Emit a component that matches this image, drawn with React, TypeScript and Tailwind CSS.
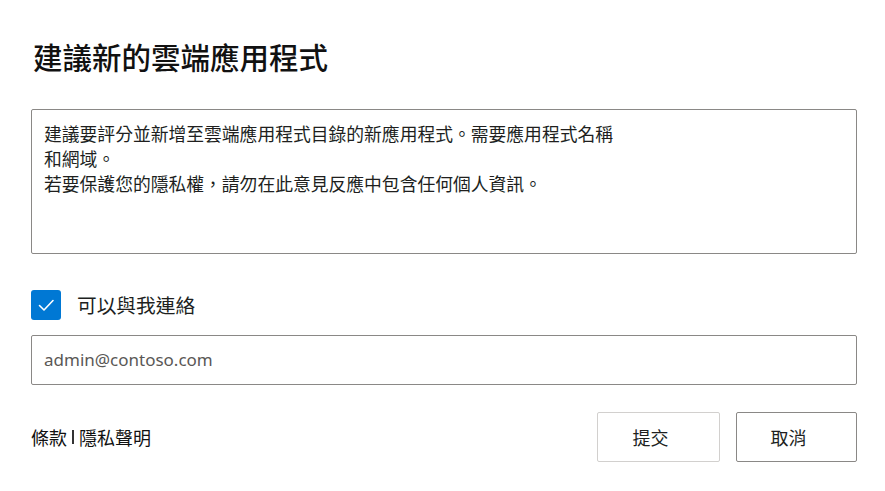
import { useState } from 'react'

const cjk = "font-['Noto_Sans_CJK_TC','Noto_Sans',sans-serif]"

function CheckIcon() {
  return (
    <svg viewBox="0 0 30 30" className="size-[30px]" fill="none">
      <path d="M8.5 15.5l4.5 4.5 9-9.5" stroke="white" strokeWidth="1.6" strokeLinecap="round" strokeLinejoin="round" />
    </svg>
  )
}

export default function App() {
  const [contact, setContact] = useState(true)

  return (
    <div className={`h-[491px] w-[885px] bg-white pl-[31px] pr-[28px] pt-[36px] text-[#000] ${cjk}`}>
      <h1 className="h-[40px] pl-[2px] text-[29.5px] font-medium leading-[40px] text-[#111]">
        建議新的雲端應用程式
      </h1>

      <div className="mt-[33px] h-[145px] rounded-[2px] border border-[#8a8886] pl-[12px] pt-[11px] text-[17.8px] leading-[25px] text-[#201f1e]">
        <p>建議要評分並新增至雲端應用程式目錄的新應用程式。需要應用程式名稱</p>
        <p>和網域。</p>
        <p>若要保護您的隱私權，請勿在此意見反應中包含任何個人資訊。</p>
      </div>

      <label className="mt-[36px] flex h-[30px] cursor-pointer items-center gap-[16px]">
        <button
          type="button"
          onClick={() => setContact(!contact)}
          className={`flex size-[30px] items-center justify-center rounded-[3px] ${contact ? 'bg-[#0078d4]' : 'border border-[#605e5c] bg-white'}`}
        >
          {contact ? <CheckIcon /> : null}
        </button>
        <span className="text-[19.7px] text-[#201f1e]">可以與我連絡</span>
      </label>

      <div className="mt-[15px] flex h-[50px] items-center rounded-[2px] border border-[#8a8886] pl-[12px]">
        <span className="font-['Noto_Sans',sans-serif] text-[17px] text-[#5a5856]">admin@contoso.com</span>
      </div>

      <div className="mt-[27px] flex items-center justify-between">
        <div className="flex items-center text-[18px] text-[#111]">
          <span>條款</span>
          <span className="mx-[5px] h-[14px] w-[2px] bg-[#333]" />
          <span>隱私聲明</span>
        </div>
        <div className="flex gap-[16px]">
          <button
            type="button"
            className="h-[50px] w-[123px] rounded-[2px] border border-[#d2d0ce] bg-white pr-[16px] text-[18px] text-[#201f1e]"
          >
            提交
          </button>
          <button
            type="button"
            className="h-[50px] w-[121px] rounded-[2px] border border-[#8a8886] bg-white pr-[16px] text-[18px] text-[#201f1e]"
          >
            取消
          </button>
        </div>
      </div>
    </div>
  )
}
